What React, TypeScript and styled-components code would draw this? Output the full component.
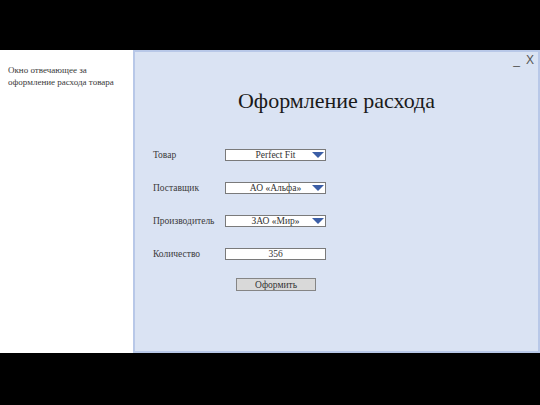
import React from "react";
import styled, { createGlobalStyle } from "styled-components";

const Global = createGlobalStyle`
  html, body { margin: 0; padding: 0; background: #000; }
  #root { width: 540px; height: 405px; }
`;

const Screen = styled.div`
  width: 540px;
  height: 405px;
  background: #000;
  display: flex;
  flex-direction: column;
`;

const Letterbox = styled.div<{ $h: number }>`
  height: ${(p) => p.$h}px;
  flex: none;
`;

const Main = styled.div`
  height: 303px;
  display: flex;
  flex: none;
`;

const Side = styled.div`
  width: 133px;
  flex: none;
  background: #fff;
  padding: 14px 0 0 8px;
  box-sizing: border-box;
  font-family: "Liberation Serif", "Times New Roman", serif;
  font-size: 9px;
  line-height: 12px;
  color: #3a3a3a;
`;

const Window = styled.div`
  flex: 1;
  background: #dae3f3;
  border: 2px solid #b8c8e8;
  box-sizing: border-box;
  display: flex;
  flex-direction: column;
`;

const Controls = styled.div`
  height: 15px;
  display: flex;
  justify-content: flex-end;
  align-items: flex-end;
  gap: 6px;
  padding-right: 4px;
  font-family: "Liberation Sans", Arial, sans-serif;
  font-size: 12px;
  color: #555;
`;

const Ctrl = styled.span`
  line-height: 14px;
`;

const Title = styled.h1`
  margin: 21px 0 0 0;
  text-align: center;
  font-family: "Liberation Serif", "Times New Roman", serif;
  font-weight: normal;
  font-size: 22px;
  line-height: 26px;
  color: #1a1a1a;
`;

const Form = styled.div`
  margin: 35px 0 0 18px;
  display: grid;
  grid-template-columns: 72px 101px;
  grid-auto-rows: 12px;
  row-gap: 21px;
  align-items: center;
`;

const Label = styled.div`
  font-family: "Liberation Serif", "Times New Roman", serif;
  font-size: 9.5px;
  color: #3a3a3a;
  white-space: nowrap;
`;

const Field = styled.div`
  position: relative;
  height: 12px;
  background: #fff;
  border: 1px solid #7a7a7a;
  box-sizing: border-box;
  font-family: "Liberation Serif", "Times New Roman", serif;
  font-size: 9.5px;
  line-height: 10px;
  text-align: center;
  color: #333;
`;

const Arrow = styled.span`
  position: absolute;
  right: 1px;
  top: 2px;
  width: 0;
  height: 0;
  border-left: 6px solid transparent;
  border-right: 6px solid transparent;
  border-top: 6px solid #3b5ea6;
`;

const ButtonRow = styled.div`
  display: flex;
  margin: 18px 0 0 18px;
  padding-left: 83px;
`;

const Button = styled.button`
  width: 80px;
  height: 13px;
  padding: 0;
  background: #d9d9d9;
  border: 1px solid #858585;
  box-sizing: border-box;
  font-family: "Liberation Serif", "Times New Roman", serif;
  font-size: 9.5px;
  line-height: 10px;
  color: #333;
`;

const fields = [
  { label: "Товар", value: "Perfect Fit", drop: true },
  { label: "Поставщик", value: "АО «Альфа»", drop: true },
  { label: "Производитель", value: "ЗАО «Мир»", drop: true },
  { label: "Количество", value: "356", drop: false },
];

export default function App() {
  return (
    <Screen>
      <Global />
      <Letterbox $h={50} />
      <Main>
        <Side>
          Окно отвечающее за
          <br />
          оформление расхода товара
        </Side>
        <Window>
          <Controls>
            <Ctrl>_</Ctrl>
            <Ctrl>X</Ctrl>
          </Controls>
          <Title>Оформление расхода</Title>
          <Form>
            {fields.map((f) => (
              <React.Fragment key={f.label}>
                <Label>{f.label}</Label>
                <Field>
                  {f.value}
                  {f.drop && <Arrow />}
                </Field>
              </React.Fragment>
            ))}
          </Form>
          <ButtonRow>
            <Button>Оформить</Button>
          </ButtonRow>
        </Window>
      </Main>
      <Letterbox $h={52} />
    </Screen>
  );
}
